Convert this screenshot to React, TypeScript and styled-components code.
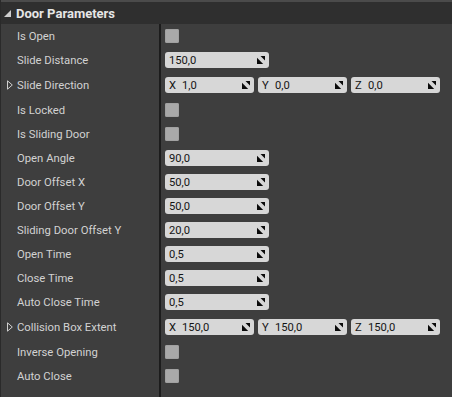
import React from "react";
import styled, { createGlobalStyle } from "styled-components";

const GlobalStyle = createGlobalStyle`
  html, body {
    margin: 0;
    padding: 0;
    background: #3e3e3e;
  }
  body {
    font-family: Roboto, "Liberation Sans", Arial, sans-serif;
  }
`;

const Panel = styled.div`
  width: 452px;
  height: 397px;
  display: flex;
  flex-direction: column;
  background: #3e3e3e;
  border-left: 1px solid #2a2a2a;
  box-sizing: border-box;
  overflow: hidden;
`;

const Header = styled.div`
  height: 24px;
  flex-shrink: 0;
  display: flex;
  align-items: center;
  gap: 5px;
  padding-left: 3px;
  box-sizing: border-box;
  background: #2f2f2f;
  border-top: 2px solid #4b4b4b;
  color: #e6e6e6;
  font-size: 13px;
  font-weight: 700;
`;

const Row = styled.div<{ $tall?: boolean }>`
  display: grid;
  grid-template-columns: 160px 1fr;
  height: ${(p) => (p.$tall ? 26 : 24)}px;
  flex-shrink: 0;
`;

const Filler = styled(Row)`
  flex: 1;
  height: auto;
`;

const LabelCell = styled.div`
  position: relative;
  display: flex;
  align-items: center;
  padding-left: 16px;
  border-right: 2px solid #1c1c1c;
  color: #d2d2d2;
  font-size: 11.3px;
  white-space: nowrap;
`;

const Expander = styled.svg`
  position: absolute;
  left: 6px;
  top: 50%;
  margin-top: -5px;
`;

const ValueCell = styled.div`
  display: flex;
  align-items: center;
  gap: 4px;
  padding-left: 4px;
`;

const Checkbox = styled.div`
  width: 14px;
  height: 14px;
  border-radius: 2px;
  background: #a9a9a9;
  box-shadow: inset 0 0 0 1px #a1a1a1;
`;

const Field = styled.div<{ $w: number }>`
  width: ${(p) => p.$w}px;
  height: 16px;
  box-sizing: border-box;
  border-radius: 3px;
  background: #d7d7d7;
  display: flex;
  align-items: center;
  padding: 0 4px 0 4px;
  color: #141414;
  font-size: 11.2px;
`;

const Axis = styled.span`
  width: 13px;
  flex-shrink: 0;
`;

const FieldText = styled.span`
  flex: 1;
`;

const SpinIcon = () => (
  <svg width="8" height="8" viewBox="0 0 8 8">
    <polygon points="3.5,0 8,0 8,4.5" fill="#0a0a0a" />
    <polygon points="0,1.8 0,8 6.2,8" fill="#0a0a0a" />
  </svg>
);

type Prop =
  | { label: string; kind: "bool" }
  | { label: string; kind: "num"; value: string }
  | { label: string; kind: "vec"; values: [string, string, string] };

const props: Prop[] = [
  { label: "Is Open", kind: "bool" },
  { label: "Slide Distance", kind: "num", value: "150,0" },
  { label: "Slide Direction", kind: "vec", values: ["1,0", "0,0", "0,0"] },
  { label: "Is Locked", kind: "bool" },
  { label: "Is Sliding Door", kind: "bool" },
  { label: "Open Angle", kind: "num", value: "90,0" },
  { label: "Door Offset X", kind: "num", value: "50,0" },
  { label: "Door Offset Y", kind: "num", value: "50,0" },
  { label: "Sliding Door Offset Y", kind: "num", value: "20,0" },
  { label: "Open Time", kind: "num", value: "0,5" },
  { label: "Close Time", kind: "num", value: "0,5" },
  { label: "Auto Close Time", kind: "num", value: "0,5" },
  { label: "Collision Box Extent", kind: "vec", values: ["150,0", "150,0", "150,0"] },
  { label: "Inverse Opening", kind: "bool" },
  { label: "Auto Close", kind: "bool" },
];

const axes = ["X", "Y", "Z"];

const App = () => {
  return (
    <>
      <GlobalStyle />
      <Panel>
        <Header>
          <svg width="7" height="7" viewBox="0 0 7 7">
            <polygon points="7,0 7,7 0,7" fill="#cfcfcf" />
          </svg>
          Door Parameters
        </Header>
        {props.map((p) => (
          <Row key={p.label} $tall={p.kind === "vec"}>
            <LabelCell>
              {p.kind === "vec" && (
                <Expander width="6" height="10" viewBox="0 0 6 10">
                  <polygon
                    points="0.5,0.8 5.3,5 0.5,9.2"
                    fill="none"
                    stroke="#cfcfcf"
                    strokeWidth="1"
                  />
                </Expander>
              )}
              {p.label}
            </LabelCell>
            <ValueCell>
              {p.kind === "bool" && <Checkbox />}
              {p.kind === "num" && (
                <Field $w={104}>
                  <FieldText>{p.value}</FieldText>
                  <SpinIcon />
                </Field>
              )}
              {p.kind === "vec" &&
                p.values.map((v, i) => (
                  <Field key={axes[i]} $w={89}>
                    <Axis>{axes[i]}</Axis>
                    <FieldText>{v}</FieldText>
                    <SpinIcon />
                  </Field>
                ))}
            </ValueCell>
          </Row>
        ))}
        <Filler>
          <LabelCell />
          <ValueCell />
        </Filler>
      </Panel>
    </>
  );
};

export default App;
